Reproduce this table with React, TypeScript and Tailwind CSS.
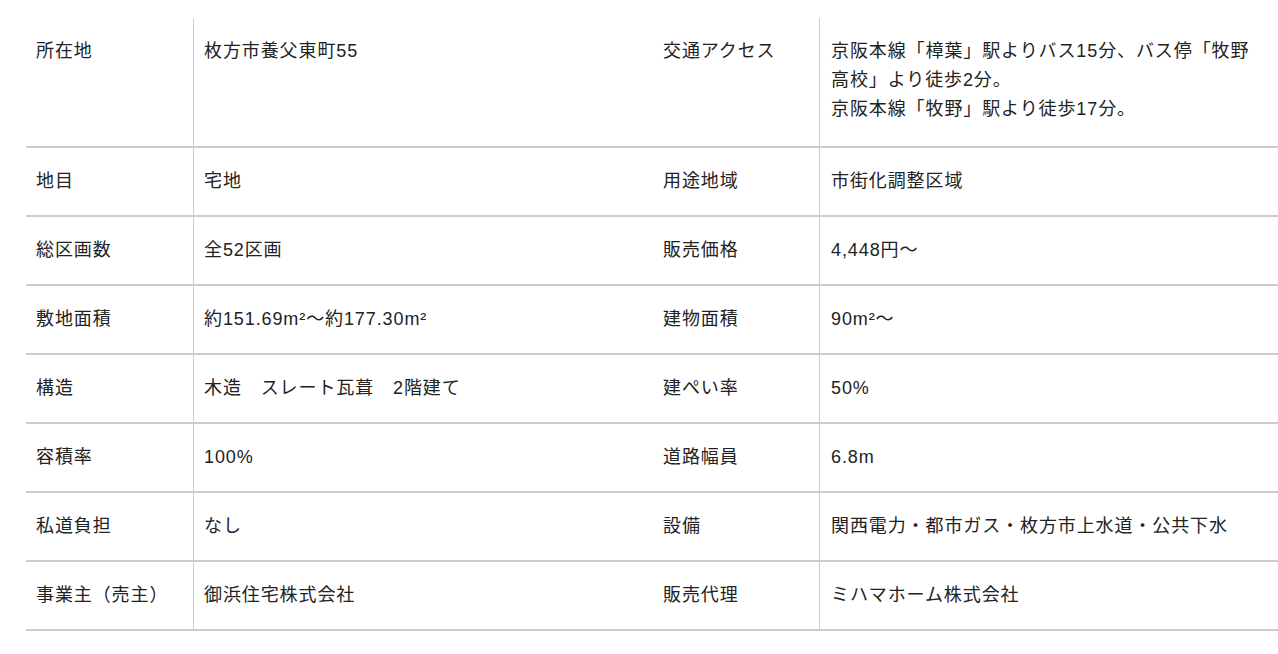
const rows: [string, React.ReactNode, string, React.ReactNode][] = [
  [
    "所在地",
    "枚方市養父東町55",
    "交通アクセス",
    <>
      京阪本線「樟葉」駅よりバス15分、バス停「牧野高校」より徒歩2分。
      <br />
      京阪本線「牧野」駅より徒歩17分。
    </>,
  ],
  ["地目", "宅地", "用途地域", "市街化調整区域"],
  ["総区画数", "全52区画", "販売価格", "4,448円～"],
  ["敷地面積", "約151.69m²～約177.30m²", "建物面積", "90m²～"],
  ["構造", "木造　スレート瓦葺　2階建て", "建ぺい率", "50%"],
  ["容積率", "100%", "道路幅員", "6.8m"],
  ["私道負担", "なし", "設備", "関西電力・都市ガス・枚方市上水道・公共下水"],
  ["事業主（売主）", "御浜住宅株式会社", "販売代理", "ミハマホーム株式会社"],
];

export default function App() {
  return (
    <div
      className="min-h-screen bg-white pl-[26px] pt-[18px] text-[18px] leading-[29px] tracking-[0.05em] text-[#222]"
      style={{ fontFamily: '"Liberation Sans", "Noto Sans CJK JP", sans-serif' }}
    >
      <div className="w-[1252px]">
        {rows.map(([l1, v1, l2, v2], i) => (
          <div
            key={l1}
            className={`grid grid-cols-[168px_459px_167px_458px] border-b-2 border-[#cccccc] ${i === 0 ? "min-h-[130px]" : ""}`}
          >
            <div className="border-r border-[#cccccc] px-[10px] py-[19px]">{l1}</div>
            <div className="px-[10px] py-[19px]">{v1}</div>
            <div className="border-r border-[#cccccc] px-[10px] py-[19px]">{l2}</div>
            <div className="py-[19px] pl-[11px] pr-[22px]">{v2}</div>
          </div>
        ))}
      </div>
    </div>
  );
}
